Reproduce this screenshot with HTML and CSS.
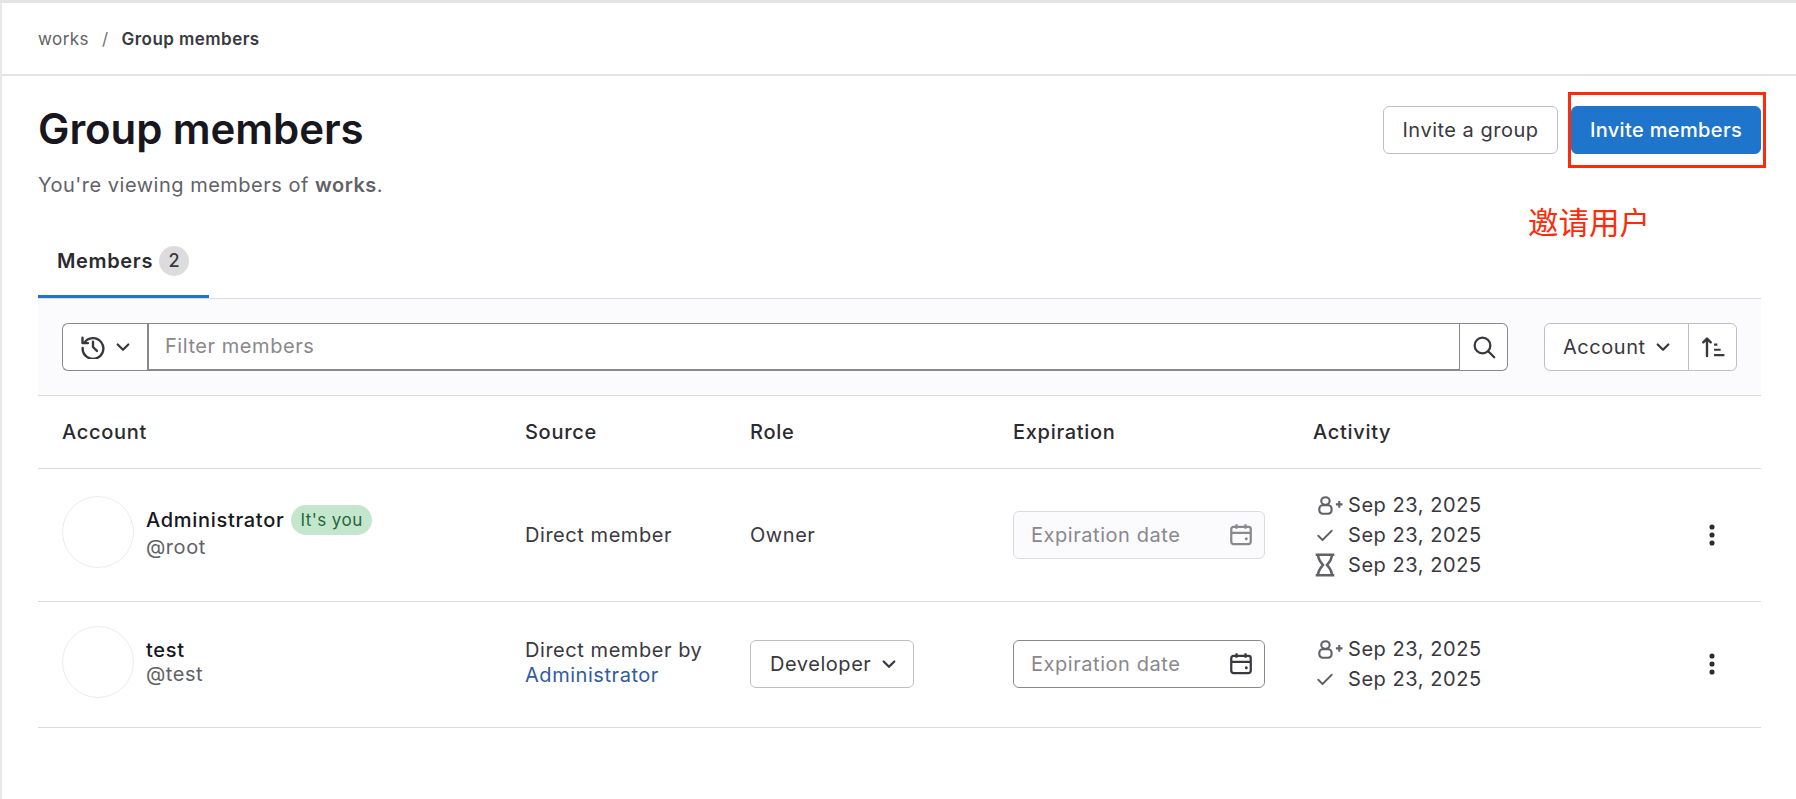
FILE: index.html
```html
<!DOCTYPE html>
<html lang="en">
<head>
<meta charset="utf-8">
<title>Group members</title>
<link rel="stylesheet" href="styles.css">
</head>
<body>
<svg class="defs" width="0" height="0" aria-hidden="true">
  <symbol id="i-chev" viewBox="0 0 16 16"><path d="M3.75 6l4.25 4.25L12.25 6" fill="none" stroke="currentColor" stroke-width="1.8" stroke-linecap="round" stroke-linejoin="round"/></symbol>
  <symbol id="i-hist" viewBox="0 0 16 16"><path d="M2.1 5.4A6.9 6.9 0 1 1 1.1 8.6M1 1.8v3.6h3.6M8 4.4V8l2.6 2.6" fill="none" stroke="currentColor" stroke-width="1.6" stroke-linecap="round" stroke-linejoin="round"/></symbol>
  <symbol id="i-search" viewBox="0 0 16 16"><circle cx="7" cy="7" r="5.25" fill="none" stroke="currentColor" stroke-width="1.5"/><path d="M10.8 10.8l4 4" fill="none" stroke="currentColor" stroke-width="1.5" stroke-linecap="round"/></symbol>
  <symbol id="i-sort" viewBox="0 0 16 16"><path d="M4 14V2.4M1.500 4.900L4 2.400 6.500 4.900" fill="none" stroke="currentColor" stroke-width="1.600" stroke-linecap="round" stroke-linejoin="round"/><path d="M8.700 6.400h2.200M8.700 9.800h4.400M8.700 13.400h6.900" fill="none" stroke="currentColor" stroke-width="1.400"/></symbol>
  <symbol id="i-cal" viewBox="0 0 16 16"><path d="M5 .8v3M11 .8v3M1.500 6.500h13M3 2.600h10a1.500 1.500 0 0 1 1.500 1.500v8.400a1.500 1.500 0 0 1-1.500 1.500H3a1.500 1.500 0 0 1-1.500-1.500V4.100A1.500 1.500 0 0 1 3 2.600z" fill="none" stroke="currentColor" stroke-width="1.500"/><circle cx="11.500" cy="10.500" r="1" fill="currentColor"/></symbol>
  <symbol id="i-user" viewBox="0 0 20 16"><ellipse cx="8.300" cy="5.300" rx="2.800" ry="2.500" fill="none" stroke="currentColor" stroke-width="1.400"/><rect x="4.200" y="8.200" width="8.200" height="5.600" rx="2.300" fill="none" stroke="currentColor" stroke-width="1.400"/><path d="M15.300 7.600h4.400M17.500 5.400v4.400" fill="none" stroke="currentColor" stroke-width="1.400"/></symbol>
  <symbol id="i-check" viewBox="0 0 16 16"><path d="M2.600 8.600l3.400 3.400 7.400-7.400" fill="none" stroke="currentColor" stroke-width="1.500" stroke-linecap="round" stroke-linejoin="round"/></symbol>
  <symbol id="i-hour" viewBox="0 0 16 16"><path d="M1.800 1.200h12.400M1.800 14.800h12.400M3.400 1.200c0 3.400 1.700 5 3.300 6.800-1.600 1.800-3.300 3.400-3.300 6.800M12.600 1.200c0 3.400-1.700 5-3.300 6.800 1.600 1.800 3.300 3.400 3.300 6.800" fill="none" stroke="currentColor" stroke-width="1.700"/></symbol>
  <symbol id="i-kebab" viewBox="0 0 16 16"><circle cx="8" cy="2.700" r="1.700" fill="currentColor"/><circle cx="8" cy="8" r="1.700" fill="currentColor"/><circle cx="8" cy="13.300" r="1.700" fill="currentColor"/></symbol>
</svg>

<nav class="crumbs">
  <a class="crumb">works</a><span class="crumb-sep">/</span><strong class="crumb-now">Group members</strong>
</nav>

<main class="page">
  <header class="head">
    <div>
      <h1 class="title">Group members</h1>
      <p class="sub">You're viewing members of <strong>works</strong>.</p>
    </div>
    <div class="head-actions">
      <button class="btn">Invite a group</button>
      <button class="btn btn-primary">Invite members</button>
    </div>
  </header>

  <div class="tabs">
    <div class="tab">Members <span class="count">2</span></div>
  </div>

  <div class="filter-bar">
    <div class="filter">
      <div class="f-history">
        <svg class="ico"><use href="#i-hist"/></svg>
        <svg class="ico-s"><use href="#i-chev"/></svg>
      </div>
      <div class="f-input">Filter members</div>
      <div class="f-search"><svg class="ico"><use href="#i-search"/></svg></div>
    </div>
    <div class="sort">
      <div class="sort-field">Account <svg class="ico-s"><use href="#i-chev"/></svg></div>
      <div class="sort-dir"><svg class="ico"><use href="#i-sort"/></svg></div>
    </div>
  </div>

  <div class="row row-head">
    <div>Account</div><div>Source</div><div>Role</div><div>Expiration</div><div>Activity</div><div></div>
  </div>

  <div class="row row-a">
    <div class="account">
      <div class="avatar"></div>
      <div>
        <div class="name-line"><span class="name">Administrator</span><span class="you">It's you</span></div>
        <div class="handle">@root</div>
      </div>
    </div>
    <div class="cell">Direct member</div>
    <div class="cell">Owner</div>
    <div class="date date-off">Expiration date <svg class="ico"><use href="#i-cal"/></svg></div>
    <div class="activity">
      <div class="act"><svg class="ico-u"><use href="#i-user"/></svg>Sep 23, 2025</div>
      <div class="act"><svg class="ico-c"><use href="#i-check"/></svg>Sep 23, 2025</div>
      <div class="act"><svg class="ico"><use href="#i-hour"/></svg>Sep 23, 2025</div>
    </div>
    <svg class="ico kebab"><use href="#i-kebab"/></svg>
  </div>

  <div class="row row-b">
    <div class="account">
      <div class="avatar"></div>
      <div>
        <div class="name">test</div>
        <div class="handle">@test</div>
      </div>
    </div>
    <div class="cell source">Direct member by<br><a class="link">Administrator</a></div>
    <div><div class="role">Developer <svg class="ico-s"><use href="#i-chev"/></svg></div></div>
    <div class="date">Expiration date <svg class="ico"><use href="#i-cal"/></svg></div>
    <div class="activity">
      <div class="act"><svg class="ico-u"><use href="#i-user"/></svg>Sep 23, 2025</div>
      <div class="act"><svg class="ico-c"><use href="#i-check"/></svg>Sep 23, 2025</div>
    </div>
    <svg class="ico kebab"><use href="#i-kebab"/></svg>
  </div>
</main>

<div class="mark-box"></div>
<div class="mark-text">邀请用户</div>
</body>
</html>
```

FILE: styles.css
```css
* { box-sizing: border-box; }
html, body { height: 100%; }
body {
  margin: 0;
  border-top: 3px solid #e4e4e4;
  border-left: 2px solid #e8e8e8;
  background: #fff;
  color: #3a383f;
  font: 20px/24px Inter, "Noto Sans", sans-serif;
  letter-spacing: .55px;
  overflow: hidden;
}
.defs { position: absolute; }
svg { display: block; flex: none; }
.ico { width: 24px; height: 24px; }
.ico-s { width: 20px; height: 20px; }
.ico-c { width: 20px; height: 20px; margin: 0 2px; color: #626168; }
.ico-u { width: 30px; height: 24px; margin-right: -6px; color: #626168; }

.crumbs {
  height: 73px;
  padding: 0 0 0 36px;
  border-bottom: 2px solid #e4e4e4;
  display: flex;
  align-items: center;
  font-size: 17px;
  letter-spacing: .45px;
}
.crumb { color: #626168; }
.crumb-sep { color: #737278; margin: 0 13px; }
.crumb-now { font-weight: 600; color: #3a383f; }

.page { padding: 0 35px 0 36px; }

.head { display: flex; justify-content: space-between; }
.title {
  margin: 25px 0 0;
  font-size: 42px;
  line-height: 56px;
  font-weight: 600;
  letter-spacing: -.08px;
  color: #18171d;
}
.sub { margin: 14px 0 0; color: #626168; line-height: 28px; letter-spacing: .5px; }
.sub strong { font-weight: 600; }
.head-actions { display: flex; gap: 13px; margin-top: 30px; align-items: flex-start; }
.btn {
  height: 48px;
  padding: 0 18.5px;
  font: inherit;
  letter-spacing: .5px;
  color: #3a383f;
  background: #fff;
  border: 1px solid #bfbfc3;
  border-radius: 6px;
}
.btn-primary { width: 190px; padding: 0; color: #fff; background: #1f75cb; border-color: #1f75cb; font-weight: 500; letter-spacing: .35px; }

.tabs { margin-top: 29px; height: 71px; border-bottom: 1px solid #dcdcde; display: flex; }
.tab {
  width: 171px;
  height: 70px;
  display: flex;
  align-items: flex-start;
  gap: 6px;
  padding: 21px 0 0 19px;
  border-bottom: 3px solid #1f75cb;
  font-weight: 600;
  letter-spacing: .65px;
  color: #2b2a30;
}
.count {
  width: 30px; height: 30px;
  margin-top: -3px;
  border-radius: 50%;
  background: #dcdcde;
  text-align: center;
  line-height: 30px;
  font-weight: 500;
  font-size: 18px;
  letter-spacing: 0;
  color: #3a383f;
}

.filter-bar {
  height: 97px;
  padding: 24px 24px 0;
  background: #fbfafd;
  border-bottom: 1px solid #dcdcde;
  display: flex;
  justify-content: space-between;
}
.filter { width: 1446px; height: 48px; display: flex; }
.f-history {
  width: 85px;
  display: flex; align-items: center; gap: 8px;
  padding-left: 18px;
  background: #fff;
  border: 1px solid #89888d;
  border-right: 0;
  border-radius: 6px 0 0 6px;
}
.f-input {
  flex: 1;
  padding-left: 16px;
  line-height: 44px;
  background: #fff;
  border: 2px solid #89888d;
  border-width: 1px 1px 2px 2px;
  color: #89888d;
}
.f-search {
  width: 48px;
  display: flex; align-items: center; justify-content: center;
  background: #fff;
  border: 1px solid #89888d;
  border-left: 0;
  border-radius: 0 6px 6px 0;
}
.sort { width: 193px; height: 48px; display: flex; background: #fff; border: 1px solid #bfbfc3; border-radius: 6px; }
.sort-field { width: 144px; display: flex; align-items: center; gap: 7px; padding-left: 18px; border-right: 1px solid #bfbfc3; }
.sort-dir { flex: 1; display: flex; align-items: center; justify-content: center; }

.row {
  display: grid;
  grid-template-columns: 463px 225px 263px 300px 1fr 24px;
  align-items: center;
  padding: 0 37px 0 24px;
  border-bottom: 1px solid #dcdcde;
}
.row-head { height: 73px; font-weight: 550; letter-spacing: .7px; color: #2b2a30; }
.row-a { height: 133px; }
.row-b { height: 126px; padding-bottom: 2px; }
.account { display: flex; align-items: center; gap: 12px; margin-bottom: 7px; }
.row-b .account { margin-bottom: 4px; }
.avatar { width: 72px; height: 72px; border-radius: 50%; border: 1px solid #ececef; }
.name-line { display: flex; align-items: center; gap: 7px; }
.name { font-weight: 550; letter-spacing: .7px; color: #18171d; }
.you {
  height: 30px;
  padding: 0 9px;
  line-height: 30px;
  border-radius: 15px;
  background: #c3e6cd;
  color: #24663b;
  font-size: 17px;
  letter-spacing: .45px;
}
.handle { color: #626168; }
.source { line-height: 25px; margin-bottom: 2px; }
.link { color: #2f5ca0; }
.role {
  width: 164px; height: 48px;
  display: flex; align-items: center; gap: 8px;
  padding-left: 19px;
  border: 1px solid #bfbfc3;
  border-radius: 6px;
}
.date {
  width: 252px; height: 48px;
  display: flex; align-items: center; justify-content: space-between;
  padding: 0 11px 0 17px;
  border: 1px solid #89888d;
  border-radius: 6px;
  color: #89888d;
}
.date .ico { color: #3a383f; }
.date-off { background: #fbfafd; border-color: #dcdcde; }
.date-off .ico { color: #89888d; }
.act { display: flex; align-items: center; gap: 11px; height: 30px; white-space: nowrap; }
.act .ico { color: #626168; }
.kebab { color: #2b2a30; }

.mark-box {
  position: absolute;
  left: 1568px; top: 92px;
  width: 198px; height: 76px;
  border: 3px solid #fb2b0b;
}
.mark-text {
  position: absolute;
  left: 1528px; top: 201px;
  font: 400 30.5px/40px "Noto Sans CJK SC", sans-serif;
  letter-spacing: 0;
  color: #fb2b0b;
  white-space: nowrap;
}
```
